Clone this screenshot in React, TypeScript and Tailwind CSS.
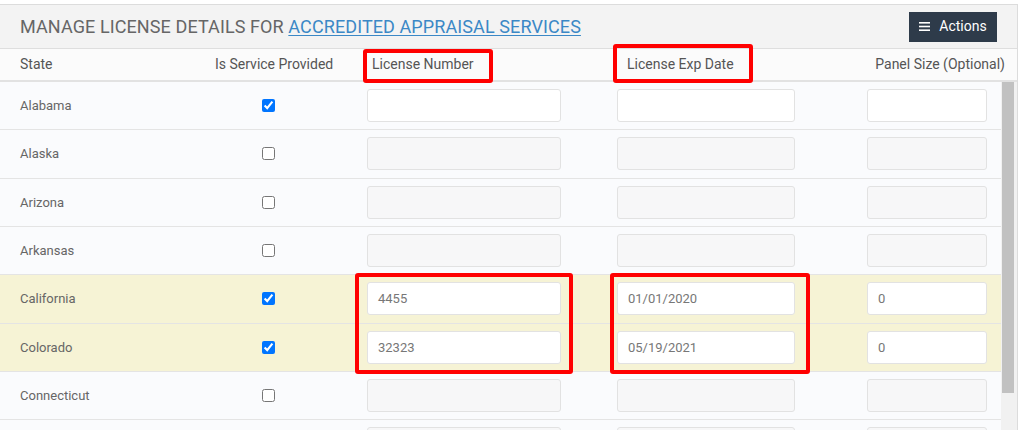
import React from "react";

type Row = {
  state: string;
  checked: boolean;
  license?: string;
  exp?: string;
  panel?: string;
};

const rows: Row[] = [
  { state: "Alabama", checked: true, license: "", exp: "", panel: "" },
  { state: "Alaska", checked: false },
  { state: "Arizona", checked: false },
  { state: "Arkansas", checked: false },
  { state: "California", checked: true, license: "4455", exp: "01/01/2020", panel: "0" },
  { state: "Colorado", checked: true, license: "32323", exp: "05/19/2021", panel: "0" },
  { state: "Connecticut", checked: false },
  { state: "", checked: false },
];

function Field({ value, enabled, width }: { value?: string; enabled: boolean; width: string }) {
  return (
    <div
      className={`${width} h-[33px] rounded-[3px] border border-[#e2e2e2] flex items-center pl-[10px] text-[13px] text-[#777] ${
        enabled ? "bg-white" : "bg-[#f7f7f8]"
      }`}
    >
      {value}
    </div>
  );
}

export default function App() {
  const font = { fontFamily: "Roboto, 'Liberation Sans', Arial, sans-serif" };
  return (
    <div className="relative w-[1024px] h-[430px] overflow-hidden bg-white" style={font}>
      <div className="pt-[4px] w-[1018px]">
        <div className="border-t border-r border-[#dcdcdc] h-[426px] flex flex-col">
          {/* panel header */}
          <div className="h-[44px] bg-[#f3f3f3] border-b border-[#dedede] flex items-center justify-between pl-[20px] pr-[20px] shrink-0">
            <div className="text-[18px] uppercase text-[#666] tracking-[0.1px]">
              Manage License Details for{" "}
              <a className="text-[#3b88c6] underline underline-offset-2">Accredited Appraisal Services</a>
            </div>
            <button className="w-[88px] h-[30px] bg-[#2e3b4a] text-white text-[14px] flex items-center justify-center gap-[9px]">
              <svg width="11" height="9" viewBox="0 0 11 9">
                <rect x="0" y="0" width="11" height="1.6" fill="#fff" />
                <rect x="0" y="3.7" width="11" height="1.6" fill="#fff" />
                <rect x="0" y="7.4" width="11" height="1.6" fill="#fff" />
              </svg>
              <span>Actions</span>
            </button>
          </div>

          {/* table header */}
          <div className="h-[33px] bg-[#fbfbfb] border-b-2 border-[#e2e2e2] flex items-center text-[14px] text-[#555] shrink-0">
            <div className="w-[200px] pl-[20px]">State</div>
            <div className="w-[172px] pl-[15px]">Is Service Provided</div>
            <div className="w-[255px]">License Number</div>
            <div className="flex-1">License Exp Date</div>
            <div className="pr-[12px]">Panel Size (Optional)</div>
          </div>

          {/* body */}
          <div className="flex flex-1 min-h-0">
            <div className="flex-1">
              {rows.map((r, i) => {
                const highlight = r.checked && r.license !== "";
                return (
                  <div
                    key={i}
                    className={`h-[48.33px] border-b border-[#e4e4e4] flex items-center text-[13px] text-[#666] ${
                      highlight ? "bg-[#f6f3d5]" : "bg-[#fafbfd]"
                    }`}
                  >
                    <div className="w-[200px] pl-[20px]">{r.state}</div>
                    <div className="w-[136px] flex justify-center">
                      <input
                        type="checkbox"
                        defaultChecked={r.checked}
                        className="w-[13px] h-[13px] m-0 accent-[#0075ff]"
                      />
                    </div>
                    <div className="ml-[31px]">
                      <Field value={r.license} enabled={r.checked} width="w-[194px]" />
                    </div>
                    <div className="ml-[56px]">
                      <Field value={r.exp} enabled={r.checked} width="w-[178px]" />
                    </div>
                    <div className="ml-[72px]">
                      <Field value={r.panel} enabled={r.checked} width="w-[120px]" />
                    </div>
                  </div>
                );
              })}
            </div>
            {/* scrollbar */}
            <div className="w-[16px] bg-[#f1f1f1] shrink-0 pl-[1px] pr-[3px]">
              <div className="h-[311px] bg-[#c1c1c1]" />
            </div>
          </div>
        </div>
      </div>

      {/* red annotation boxes */}
      <div className="absolute left-[363px] top-[49px] w-[130px] h-[34px] border-[4px] border-[#ff0000] rounded-[3px]" />
      <div className="absolute left-[613px] top-[44px] w-[140px] h-[39px] border-[4px] border-[#ff0000] rounded-[3px]" />
      <div className="absolute left-[355px] top-[273px] w-[218px] h-[101px] border-[4px] border-[#ff0000] rounded-[3px]" />
      <div className="absolute left-[610px] top-[273px] w-[200px] h-[101px] border-[4px] border-[#ff0000] rounded-[3px]" />
    </div>
  );
}
